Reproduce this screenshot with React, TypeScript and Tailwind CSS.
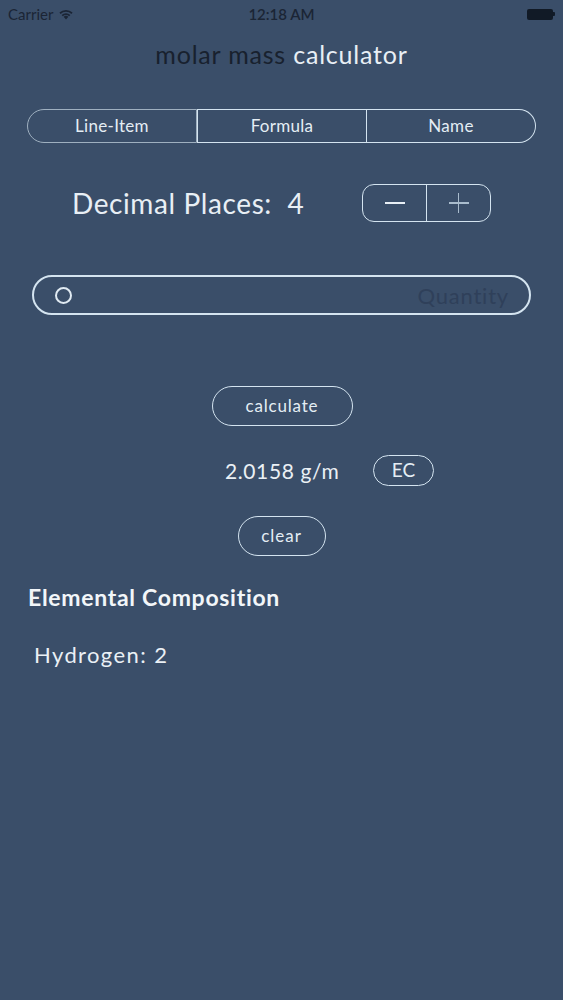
import React from 'react';

const StatusBar = () => (
  <div className="h-[28px] flex items-center justify-between px-[8px] text-[#1b2535] text-[15px]">
    <div className="flex items-center gap-[5px] w-[120px]">
      <span>Carrier</span>
      <svg width="16" height="12" viewBox="0 0 16 12" fill="#1b2535">
        <path d="M8 11.5 L5.6 8.8 A3.5 3.5 0 0 1 10.4 8.8 Z" />
        <path d="M3.6 6.9 A6.4 6.4 0 0 1 12.4 6.9 L11.2 8.2 A4.6 4.6 0 0 0 4.8 8.2 Z" />
        <path d="M1.4 4.6 A9.5 9.5 0 0 1 14.6 4.6 L13.4 5.9 A7.7 7.7 0 0 0 2.6 5.9 Z" />
      </svg>
    </div>
    <span className="font-semibold">12:18 AM</span>
    <div className="w-[120px] flex justify-end">
      <div className="flex items-center">
        <div className="w-[26px] h-[11px] bg-[#111a26] rounded-[2px]" />
        <div className="w-[2px] h-[4px] bg-[#111a26] rounded-r-[1px]" />
      </div>
    </div>
  </div>
);

const Pill = ({ children, className = '' }: { children: React.ReactNode; className?: string }) => (
  <button className={`border-[1.5px] border-[#d4e4f0] rounded-full text-[#e4edf4] flex items-center justify-center ${className}`}>
    {children}
  </button>
);

export default function App() {
  return (
    <div
      className="w-[563px] h-[1000px] bg-[#3a4e69] flex flex-col"
      style={{ fontFamily: '"Lato", "Noto Sans", sans-serif' }}
    >
      <StatusBar />

      <div className="text-center text-[25px] leading-[32px] mt-[10px] tracking-[0.8px]">
        <span className="text-[#18212e]">molar mass </span>
        <span className="text-[#e8eff5]">calculator</span>
      </div>

      {/* segmented control */}
      <div className="mx-[27px] mt-[39px] h-[34px] flex text-[17px] tracking-[0.3px] text-[#e4edf4]">
        <div className="flex-1 border border-[#9fb0c0] rounded-l-full flex items-center justify-center">Line-Item</div>
        <div className="w-[170px] border-[1.5px] border-l-[1.5px] border-[#d4e4f0] flex items-center justify-center">Formula</div>
        <div className="flex-1 border-[1.5px] border-l-0 border-[#d4e4f0] rounded-r-full flex items-center justify-center">Name</div>
      </div>

      {/* decimal places */}
      <div className="mt-[41px] flex items-center h-[38px]">
        <div className="ml-[72px] w-[290px] text-[28px] tracking-[0.6px] text-[#e8eff5]">Decimal Places:&nbsp; 4</div>
        <div className="w-[129px] h-[38px] border-[1.5px] border-[#d4e4f0] rounded-[12px] flex">
          <div className="flex-1 flex items-center justify-center border-r-[1.5px] border-[#d4e4f0]">
            <div className="w-[20px] h-[2.5px] bg-[#e8eff5]" />
          </div>
          <div className="flex-1 flex items-center justify-center relative">
            <div className="w-[20px] h-[1.5px] bg-[#a9bccd]" />
            <div className="absolute w-[1.5px] h-[20px] bg-[#a9bccd]" />
          </div>
        </div>
      </div>

      {/* quantity input */}
      <div className="mx-[32px] mt-[53px] h-[40px] border-2 border-[#d4e4f0] rounded-full flex items-center pl-[21px] pr-[20px]">
        <div className="w-[17px] h-[17px] rounded-full border-2 border-[#e0eaf2]" />
        <div className="flex-1 text-right text-[22px] tracking-[0.8px] text-[#2f405a]">Quantity</div>
      </div>

      {/* calculate */}
      <div className="mt-[71px] flex justify-center">
        <Pill className="w-[141px] h-[40px] text-[17px] tracking-[0.8px] ml-[1px]">calculate</Pill>
      </div>

      <div className="mt-[29px] h-[31px] flex items-center">
        <div className="ml-[225px] w-[148px] text-[21px] tracking-[0.6px] text-[#eaf0f5]">2.0158 g/m</div>
        <Pill className="w-[61px] h-[31px] text-[19px]">EC</Pill>
      </div>

      <div className="mt-[30px] flex justify-center">
        <Pill className="w-[88px] h-[40px] text-[17px] tracking-[1px]">clear</Pill>
      </div>

      <div className="ml-[28px] mt-[24px] text-[23px] tracking-[0.7px] font-bold text-[#f2f6f9]">Elemental Composition</div>
      <div className="ml-[34px] mt-[23px] text-[22px] tracking-[1.4px] text-[#eaf0f5]">Hydrogen: 2</div>
    </div>
  );
}
